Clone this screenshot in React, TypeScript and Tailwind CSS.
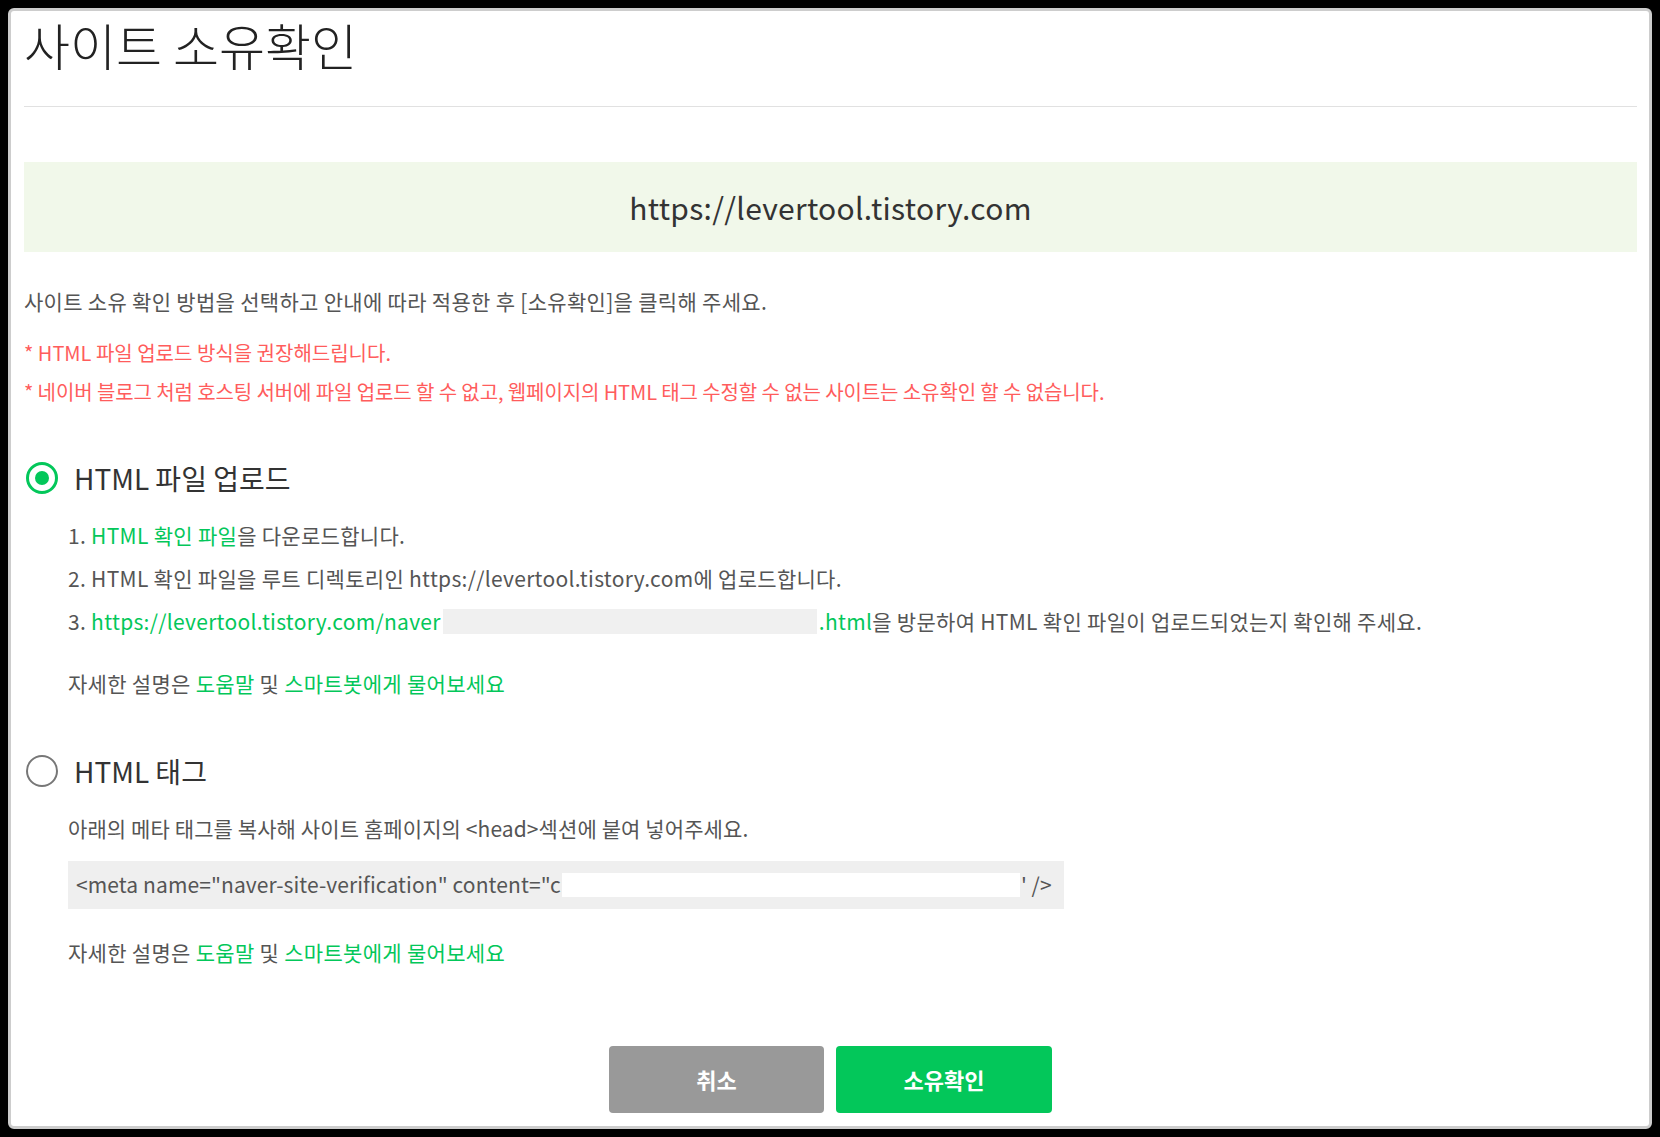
import React from "react";

function Radio({ checked }: { checked: boolean }) {
  return checked ? (
    <span className="flex h-[32px] w-[32px] items-center justify-center rounded-full border-[3.5px] border-[#03c75a] bg-white">
      <span className="h-[14px] w-[14px] rounded-full bg-[#03c75a]" />
    </span>
  ) : (
    <span className="h-[32px] w-[32px] rounded-full border-[2.5px] border-[#777777] bg-white" />
  );
}

function Help() {
  return (
    <p className="text-[21px] leading-[30px] tracking-[0.3px] text-[#555555]">
      자세한 설명은 <span className="text-[#03c75a]">도움말</span> 및{" "}
      <span className="text-[#03c75a]">스마트봇에게 물어보세요</span>
    </p>
  );
}

export default function App() {
  return (
    <div className="min-h-screen bg-black p-2 font-['Noto_Sans_CJK_KR',sans-serif]">
      <div className="flex h-[1121px] flex-col rounded-[6px] border-[3px] border-[#cdcdcd] bg-white pl-[13px] pr-[12px]">
        <h1 className="pt-[3px] text-[50px] font-light leading-[60px] tracking-[0px] text-[#222222]">
          사이트 소유확인
        </h1>
        <div className="mt-[32px] h-px bg-[#e1e1e1]" />
        <div className="mt-[55px] flex h-[90px] items-center justify-center bg-[#f1f8ea] text-[30px] tracking-[0.3px] text-[#333333]">
          https://levertool.tistory.com
        </div>
        <p className="mt-[34px] text-[21px] leading-[30px] tracking-[0.3px] text-[#555555]">
          사이트 소유 확인 방법을 선택하고 안내에 따라 적용한 후 [소유확인]을 클릭해 주세요.
        </p>
        <p className="mt-[22px] text-[20px] leading-[30px] tracking-[0px] text-[#ff5c5c]">
          * HTML 파일 업로드 방식을 권장해드립니다.
        </p>
        <p className="mt-[9px] text-[20px] leading-[30px] tracking-[-0.1px] text-[#ff5c5c]">
          * 네이버 블로그 처럼 호스팅 서버에 파일 업로드 할 수 없고, 웹페이지의 HTML 태그 수정할 수 없는 사이트는 소유확인 할 수 없습니다.
        </p>

        <div className="mt-[51px] flex h-[40px] items-center gap-[16px] pl-[2px]">
          <Radio checked />
          <span className="text-[28px] tracking-[0px] text-[#333333]">HTML 파일 업로드</span>
        </div>
        <div className="flex flex-col pl-[44px]">
          <p className="mt-[22px] text-[21px] leading-[30px] tracking-[0.3px] text-[#555555]">
            1. <span className="text-[#03c75a]">HTML 확인 파일</span>을 다운로드합니다.
          </p>
          <p className="mt-[13px] text-[21px] leading-[30px] tracking-[0.3px] text-[#555555]">
            2. HTML 확인 파일을 루트 디렉토리인 https://levertool.tistory.com에 업로드합니다.
          </p>
          <p className="mt-[13px] flex items-center whitespace-nowrap text-[21px] leading-[30px] tracking-[0.3px] text-[#555555]">
            <span>3.&nbsp;</span>
            <span className="text-[#03c75a]">https://levertool.tistory.com/naver</span>
            <span className="mx-[2px] inline-block h-[25px] w-[374px] shrink-0 bg-[#f0f0f0]" />
            <span className="text-[#03c75a]">.html</span>
            <span>을 방문하여 HTML 확인 파일이 업로드되었는지 확인해 주세요.</span>
          </p>
          <div className="mt-[32px]">
            <Help />
          </div>
        </div>

        <div className="mt-[53px] flex h-[40px] items-center gap-[16px] pl-[2px]">
          <Radio checked={false} />
          <span className="text-[28px] tracking-[0px] text-[#333333]">HTML 태그</span>
        </div>
        <div className="flex flex-col pl-[44px]">
          <p className="mt-[22px] text-[21px] leading-[30px] tracking-[0.1px] text-[#555555]">
            아래의 메타 태그를 복사해 사이트 홈페이지의 &lt;head&gt;섹션에 붙여 넣어주세요.
          </p>
          <div className="mt-[18px] flex h-[48px] w-[996px] items-center whitespace-nowrap bg-[#efefef] pl-[8px] text-[21px] tracking-[0.1px] text-[#555555]">
            <span className="shrink-0">&lt;meta name="naver-site-verification" content="c</span>
            <span className="mx-[1px] inline-block h-[24px] w-[458px] shrink-0 bg-white" />
            <span className="shrink-0">' /&gt;</span>
          </div>
          <div className="mt-[28px]">
            <Help />
          </div>
        </div>

        <div className="mt-[79px] flex justify-center gap-[12px]">
          <button className="h-[67px] w-[215px] rounded-[4px] bg-[#999999] text-[22px] font-bold text-white">
            취소
          </button>
          <button className="h-[67px] w-[216px] rounded-[4px] bg-[#03c75a] text-[22px] font-bold text-white">
            소유확인
          </button>
        </div>
      </div>
    </div>
  );
}
